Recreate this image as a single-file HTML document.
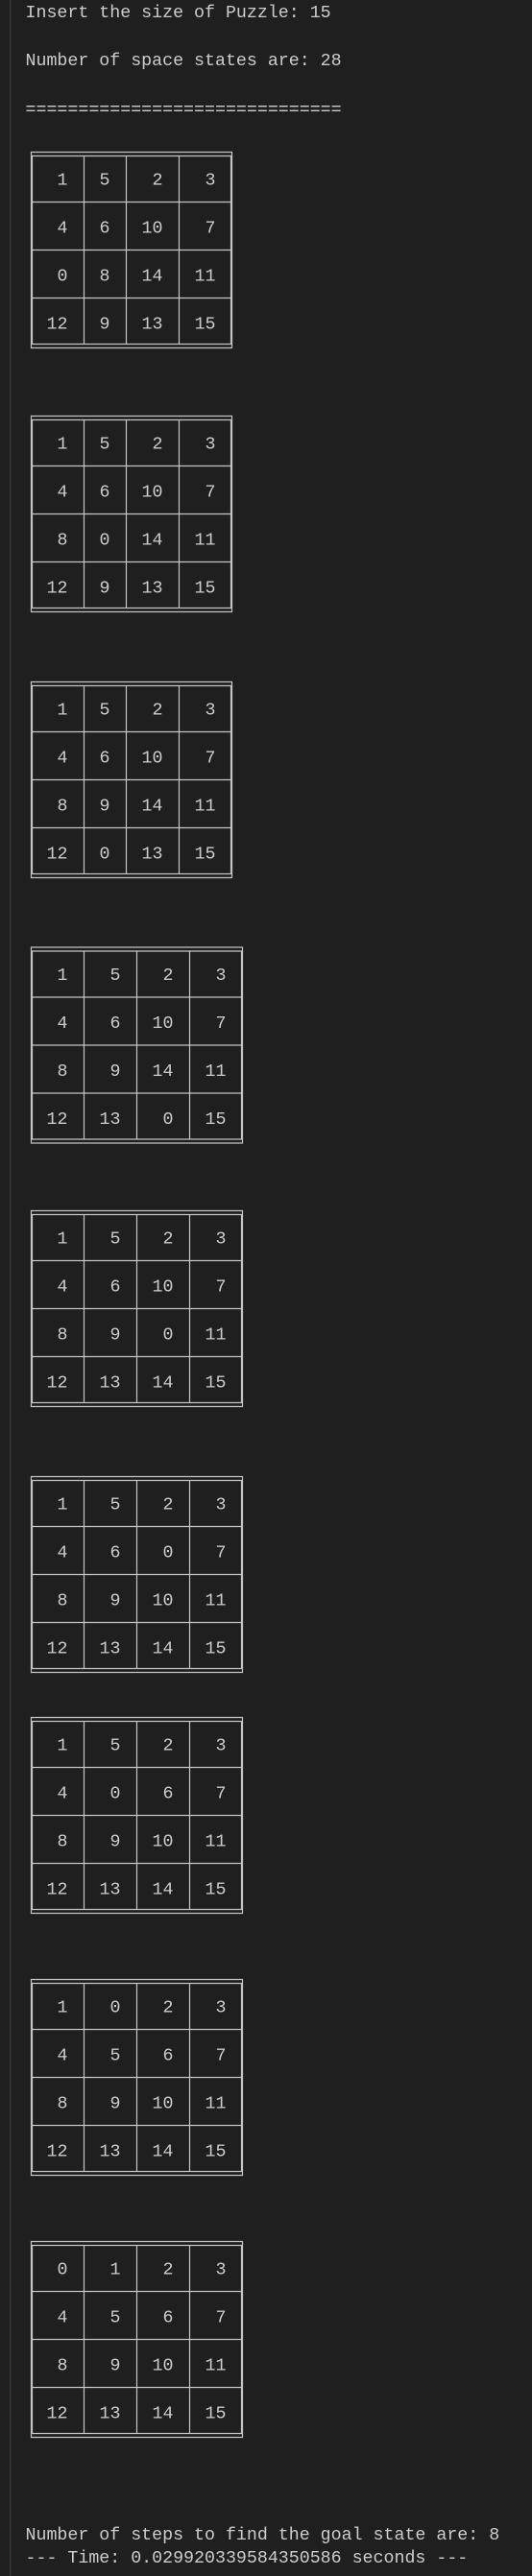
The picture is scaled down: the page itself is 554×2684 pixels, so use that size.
<!DOCTYPE html>
<html><head><meta charset="utf-8"><style>
html,body{margin:0;padding:0;background:#1f1f1f;}
body{width:554px;height:2684px;overflow:hidden;position:relative;}
svg{position:absolute;left:0;top:0;}
text{font-family:"Liberation Mono",monospace;font-size:18.3px;fill:#cccccc;}
.n text{text-anchor:end;}
.g{fill:none;stroke:#c4c4c4;stroke-width:1.2;}
</style></head><body>
<svg width="554" height="2684" viewBox="0 0 554 2684">
<rect x="10" y="0" width="1.5" height="2684" fill="#3a3a3a"/>
<text x="26.5" y="18">Insert the size of Puzzle: 15</text>
<text x="26.5" y="68">Number of space states are: 28</text>
<text x="26.5" y="119">==============================</text>

<g transform="translate(0,158)">
<path class="g" d="M32.5 0.5H241.5V204.5H32.5Z M33.5 4.5H240.5V200.5H33.5Z M33.5 52.5H240.5 M33.5 102.5H240.5 M33.5 152.5H240.5 M87.5 4.5V200.5 M131.5 4.5V200.5 M186.5 4.5V200.5"/>
<g class="n">
<text x="70.5" y="34.5">1</text><text x="114.5" y="34.5">5</text><text x="169.5" y="34.5">2</text><text x="224.5" y="34.5">3</text>
<text x="70.5" y="84.5">4</text><text x="114.5" y="84.5">6</text><text x="169.5" y="84.5">10</text><text x="224.5" y="84.5">7</text>
<text x="70.5" y="134.5">0</text><text x="114.5" y="134.5">8</text><text x="169.5" y="134.5">14</text><text x="224.5" y="134.5">11</text>
<text x="70.5" y="184.5">12</text><text x="114.5" y="184.5">9</text><text x="169.5" y="184.5">13</text><text x="224.5" y="184.5">15</text>
</g></g>

<g transform="translate(0,433)">
<path class="g" d="M32.5 0.5H241.5V204.5H32.5Z M33.5 4.5H240.5V200.5H33.5Z M33.5 52.5H240.5 M33.5 102.5H240.5 M33.5 152.5H240.5 M87.5 4.5V200.5 M131.5 4.5V200.5 M186.5 4.5V200.5"/>
<g class="n">
<text x="70.5" y="34.5">1</text><text x="114.5" y="34.5">5</text><text x="169.5" y="34.5">2</text><text x="224.5" y="34.5">3</text>
<text x="70.5" y="84.5">4</text><text x="114.5" y="84.5">6</text><text x="169.5" y="84.5">10</text><text x="224.5" y="84.5">7</text>
<text x="70.5" y="134.5">8</text><text x="114.5" y="134.5">0</text><text x="169.5" y="134.5">14</text><text x="224.5" y="134.5">11</text>
<text x="70.5" y="184.5">12</text><text x="114.5" y="184.5">9</text><text x="169.5" y="184.5">13</text><text x="224.5" y="184.5">15</text>
</g></g>

<g transform="translate(0,710)">
<path class="g" d="M32.5 0.5H241.5V204.5H32.5Z M33.5 4.5H240.5V200.5H33.5Z M33.5 52.5H240.5 M33.5 102.5H240.5 M33.5 152.5H240.5 M87.5 4.5V200.5 M131.5 4.5V200.5 M186.5 4.5V200.5"/>
<g class="n">
<text x="70.5" y="34.5">1</text><text x="114.5" y="34.5">5</text><text x="169.5" y="34.5">2</text><text x="224.5" y="34.5">3</text>
<text x="70.5" y="84.5">4</text><text x="114.5" y="84.5">6</text><text x="169.5" y="84.5">10</text><text x="224.5" y="84.5">7</text>
<text x="70.5" y="134.5">8</text><text x="114.5" y="134.5">9</text><text x="169.5" y="134.5">14</text><text x="224.5" y="134.5">11</text>
<text x="70.5" y="184.5">12</text><text x="114.5" y="184.5">0</text><text x="169.5" y="184.5">13</text><text x="224.5" y="184.5">15</text>
</g></g>

<g transform="translate(0,986.5)">
<path class="g" d="M32.5 0.5H252.5V204.5H32.5Z M33.5 4.5H251.5V200.5H33.5Z M33.5 52.5H251.5 M33.5 102.5H251.5 M33.5 152.5H251.5 M87.5 4.5V200.5 M142.5 4.5V200.5 M197.5 4.5V200.5"/>
<g class="n">
<text x="70.5" y="34.5">1</text><text x="125.5" y="34.5">5</text><text x="180.5" y="34.5">2</text><text x="235.5" y="34.5">3</text>
<text x="70.5" y="84.5">4</text><text x="125.5" y="84.5">6</text><text x="180.5" y="84.5">10</text><text x="235.5" y="84.5">7</text>
<text x="70.5" y="134.5">8</text><text x="125.5" y="134.5">9</text><text x="180.5" y="134.5">14</text><text x="235.5" y="134.5">11</text>
<text x="70.5" y="184.5">12</text><text x="125.5" y="184.5">13</text><text x="180.5" y="184.5">0</text><text x="235.5" y="184.5">15</text>
</g></g>

<g transform="translate(0,1261)">
<path class="g" d="M32.5 0.5H252.5V204.5H32.5Z M33.5 4.5H251.5V200.5H33.5Z M33.5 52.5H251.5 M33.5 102.5H251.5 M33.5 152.5H251.5 M87.5 4.5V200.5 M142.5 4.5V200.5 M197.5 4.5V200.5"/>
<g class="n">
<text x="70.5" y="34.5">1</text><text x="125.5" y="34.5">5</text><text x="180.5" y="34.5">2</text><text x="235.5" y="34.5">3</text>
<text x="70.5" y="84.5">4</text><text x="125.5" y="84.5">6</text><text x="180.5" y="84.5">10</text><text x="235.5" y="84.5">7</text>
<text x="70.5" y="134.5">8</text><text x="125.5" y="134.5">9</text><text x="180.5" y="134.5">0</text><text x="235.5" y="134.5">11</text>
<text x="70.5" y="184.5">12</text><text x="125.5" y="184.5">13</text><text x="180.5" y="184.5">14</text><text x="235.5" y="184.5">15</text>
</g></g>

<g transform="translate(0,1538)">
<path class="g" d="M32.5 0.5H252.5V204.5H32.5Z M33.5 4.5H251.5V200.5H33.5Z M33.5 52.5H251.5 M33.5 102.5H251.5 M33.5 152.5H251.5 M87.5 4.5V200.5 M142.5 4.5V200.5 M197.5 4.5V200.5"/>
<g class="n">
<text x="70.5" y="34.5">1</text><text x="125.5" y="34.5">5</text><text x="180.5" y="34.5">2</text><text x="235.5" y="34.5">3</text>
<text x="70.5" y="84.5">4</text><text x="125.5" y="84.5">6</text><text x="180.5" y="84.5">0</text><text x="235.5" y="84.5">7</text>
<text x="70.5" y="134.5">8</text><text x="125.5" y="134.5">9</text><text x="180.5" y="134.5">10</text><text x="235.5" y="134.5">11</text>
<text x="70.5" y="184.5">12</text><text x="125.5" y="184.5">13</text><text x="180.5" y="184.5">14</text><text x="235.5" y="184.5">15</text>
</g></g>

<g transform="translate(0,1789)">
<path class="g" d="M32.5 0.5H252.5V204.5H32.5Z M33.5 4.5H251.5V200.5H33.5Z M33.5 52.5H251.5 M33.5 102.5H251.5 M33.5 152.5H251.5 M87.5 4.5V200.5 M142.5 4.5V200.5 M197.5 4.5V200.5"/>
<g class="n">
<text x="70.5" y="34.5">1</text><text x="125.5" y="34.5">5</text><text x="180.5" y="34.5">2</text><text x="235.5" y="34.5">3</text>
<text x="70.5" y="84.5">4</text><text x="125.5" y="84.5">0</text><text x="180.5" y="84.5">6</text><text x="235.5" y="84.5">7</text>
<text x="70.5" y="134.5">8</text><text x="125.5" y="134.5">9</text><text x="180.5" y="134.5">10</text><text x="235.5" y="134.5">11</text>
<text x="70.5" y="184.5">12</text><text x="125.5" y="184.5">13</text><text x="180.5" y="184.5">14</text><text x="235.5" y="184.5">15</text>
</g></g>

<g transform="translate(0,2062)">
<path class="g" d="M32.5 0.5H252.5V204.5H32.5Z M33.5 4.5H251.5V200.5H33.5Z M33.5 52.5H251.5 M33.5 102.5H251.5 M33.5 152.5H251.5 M87.5 4.5V200.5 M142.5 4.5V200.5 M197.5 4.5V200.5"/>
<g class="n">
<text x="70.5" y="34.5">1</text><text x="125.5" y="34.5">0</text><text x="180.5" y="34.5">2</text><text x="235.5" y="34.5">3</text>
<text x="70.5" y="84.5">4</text><text x="125.5" y="84.5">5</text><text x="180.5" y="84.5">6</text><text x="235.5" y="84.5">7</text>
<text x="70.5" y="134.5">8</text><text x="125.5" y="134.5">9</text><text x="180.5" y="134.5">10</text><text x="235.5" y="134.5">11</text>
<text x="70.5" y="184.5">12</text><text x="125.5" y="184.5">13</text><text x="180.5" y="184.5">14</text><text x="235.5" y="184.5">15</text>
</g></g>

<g transform="translate(0,2335)">
<path class="g" d="M32.5 0.5H252.5V204.5H32.5Z M33.5 4.5H251.5V200.5H33.5Z M33.5 52.5H251.5 M33.5 102.5H251.5 M33.5 152.5H251.5 M87.5 4.5V200.5 M142.5 4.5V200.5 M197.5 4.5V200.5"/>
<g class="n">
<text x="70.5" y="34.5">0</text><text x="125.5" y="34.5">1</text><text x="180.5" y="34.5">2</text><text x="235.5" y="34.5">3</text>
<text x="70.5" y="84.5">4</text><text x="125.5" y="84.5">5</text><text x="180.5" y="84.5">6</text><text x="235.5" y="84.5">7</text>
<text x="70.5" y="134.5">8</text><text x="125.5" y="134.5">9</text><text x="180.5" y="134.5">10</text><text x="235.5" y="134.5">11</text>
<text x="70.5" y="184.5">12</text><text x="125.5" y="184.5">13</text><text x="180.5" y="184.5">14</text><text x="235.5" y="184.5">15</text>
</g></g>

<text x="26.5" y="2646">Number of steps to find the goal state are: 8</text>
<text x="26.5" y="2670">--- Time: 0.029920339584350586 seconds ---</text>
</svg>
</body></html>
